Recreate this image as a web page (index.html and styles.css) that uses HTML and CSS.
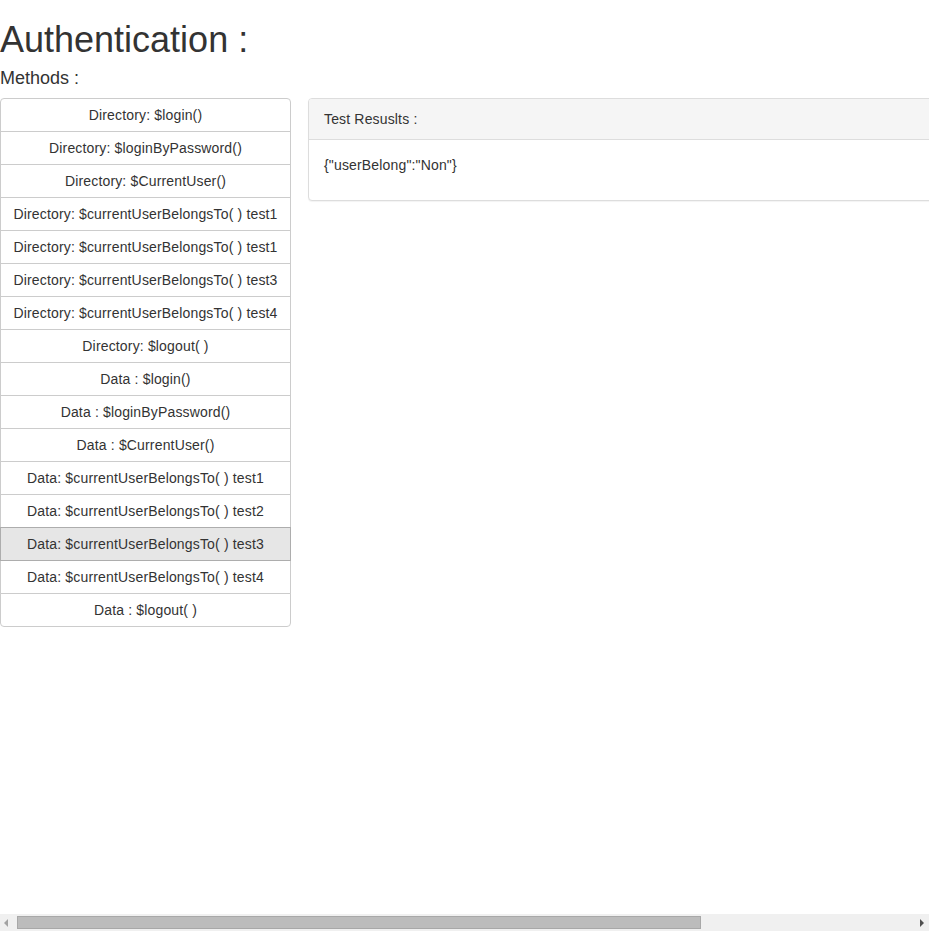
FILE: index.html
```html
<!DOCTYPE html>
<html>
<head>
<meta charset="utf-8">
<title>Authentication</title>
<link rel="stylesheet" href="styles.css">
</head>
<body>
<div class="page">
  <h1 class="title">Authentication :</h1>
  <div class="subtitle">Methods :</div>
  <div class="row">
    <div class="btn-group">
      <button class="btn">Directory: $login()</button>
      <button class="btn">Directory: $loginByPassword()</button>
      <button class="btn">Directory: $CurrentUser()</button>
      <button class="btn">Directory: $currentUserBelongsTo( ) test1</button>
      <button class="btn">Directory: $currentUserBelongsTo( ) test1</button>
      <button class="btn">Directory: $currentUserBelongsTo( ) test3</button>
      <button class="btn">Directory: $currentUserBelongsTo( ) test4</button>
      <button class="btn">Directory: $logout( )</button>
      <button class="btn">Data : $login()</button>
      <button class="btn">Data : $loginByPassword()</button>
      <button class="btn">Data : $CurrentUser()</button>
      <button class="btn">Data: $currentUserBelongsTo( ) test1</button>
      <button class="btn">Data: $currentUserBelongsTo( ) test2</button>
      <button class="btn active">Data: $currentUserBelongsTo( ) test3</button>
      <button class="btn">Data: $currentUserBelongsTo( ) test4</button>
      <button class="btn">Data : $logout( )</button>
    </div>
    <div class="panel">
      <div class="panel-heading">Test Resuslts :</div>
      <div class="panel-body"><p class="result">{"userBelong":"Non"}</p></div>
    </div>
  </div>
</div>
<div class="hscroll">
  <span class="arrow arrow-left"></span>
  <div class="track"><div class="thumb"></div></div>
  <span class="arrow arrow-right"></span>
</div>
</body>
</html>
```
FILE: styles.css
```css
html, body {
  margin: 0;
  padding: 0;
  overflow: hidden;
  background: #fff;
}
body {
  font-family: "Liberation Sans", Arial, sans-serif;
  font-size: 14px;
  line-height: 20px;
  color: #333;
}
.page {
  width: 1217px;
}
.title {
  font-size: 36px;
  font-weight: 500;
  line-height: 40px;
  margin: 20px 0 8px 0;
}
.subtitle {
  font-size: 18px;
  line-height: 20px;
  margin-bottom: 10px;
}
.row {
  display: flex;
  align-items: flex-start;
  gap: 17px;
  letter-spacing: 0.16px;
}
.btn-group {
  width: 291px;
  flex: none;
  display: flex;
  flex-direction: column;
}
.btn {
  display: block;
  width: 100%;
  font-family: inherit;
  font-size: 14px;
  line-height: 20px;
  letter-spacing: 0.16px;
  color: #333;
  background: #fff;
  border: 1px solid #ccc;
  padding: 6px 12px;
  margin: 0;
  text-align: center;
  border-radius: 0;
  position: relative;
}
.btn + .btn {
  margin-top: -1px;
}
.btn:first-child {
  border-radius: 4px 4px 0 0;
}
.btn:last-child {
  border-radius: 0 0 4px 4px;
}
.btn.active {
  background: #e6e6e6;
  border-color: #adadad;
  z-index: 1;
}
.panel {
  flex: 1;
  border: 1px solid #ddd;
  border-radius: 4px;
  background: #fff;
  box-shadow: 0 1px 1px rgba(0,0,0,0.05);
}
.panel-heading {
  background: #f5f5f5;
  border-bottom: 1px solid #ddd;
  padding: 10px 15px;
  border-radius: 3px 3px 0 0;
}
.panel-body {
  padding: 15px;
}
.result {
  margin: 0 0 10px 0;
}
.hscroll {
  position: fixed;
  left: 0;
  right: 0;
  bottom: 0;
  height: 17px;
  background: #f0f0f0;
  display: flex;
  align-items: center;
}
.track {
  flex: 1;
  height: 17px;
  position: relative;
}
.thumb {
  position: absolute;
  left: 0;
  top: 2px;
  width: 682px;
  height: 11px;
  background: #bcbcbc;
  border: 1px solid #a8a8a8;
}
.arrow {
  width: 17px;
  height: 17px;
  flex: none;
  position: relative;
}
.arrow-left::after {
  content: "";
  position: absolute;
  left: 4px;
  top: 5px;
  border-style: solid;
  border-width: 4px 4px 4px 0;
  border-color: transparent #a3a3a3 transparent transparent;
}
.arrow-right::after {
  content: "";
  position: absolute;
  left: 8px;
  top: 5px;
  border-style: solid;
  border-width: 4px 0 4px 4px;
  border-color: transparent transparent transparent #505050;
}
```
